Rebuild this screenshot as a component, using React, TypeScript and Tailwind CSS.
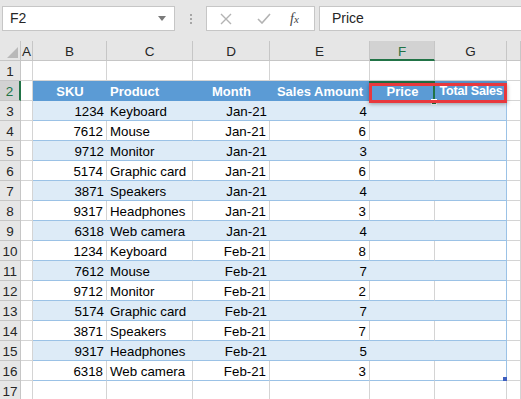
import React from "react";

// ---------------------------------------------------------------------------
// Data
// ---------------------------------------------------------------------------

const rows: [number, string, string, number][] = [
  [1234, "Keyboard", "Jan-21", 4],
  [7612, "Mouse", "Jan-21", 6],
  [9712, "Monitor", "Jan-21", 3],
  [5174, "Graphic card", "Jan-21", 6],
  [3871, "Speakers", "Jan-21", 4],
  [9317, "Headphones", "Jan-21", 3],
  [6318, "Web camera", "Jan-21", 4],
  [1234, "Keyboard", "Feb-21", 8],
  [7612, "Mouse", "Feb-21", 7],
  [9712, "Monitor", "Feb-21", 2],
  [5174, "Graphic card", "Feb-21", 7],
  [3871, "Speakers", "Feb-21", 7],
  [9317, "Headphones", "Feb-21", 5],
  [6318, "Web camera", "Feb-21", 3],
];

const letters = ["A", "B", "C", "D", "E", "F", "G", ""];

// ---------------------------------------------------------------------------
// Pieces
// ---------------------------------------------------------------------------

function FormulaBar() {
  return (
    <div className="flex h-[41px] items-start bg-[#e6e6e6] pt-[6px]">
      {/* Name box */}
      <div className="ml-[2px] flex h-[25px] w-[173px] items-center justify-between border border-[#c6c6c6] bg-white pl-[7px] pr-[8px] text-[14px] text-[#262626]">
        <span>F2</span>
        <svg width="8" height="5" viewBox="0 0 8 5">
          <path d="M0 0 L8 0 L4 5 Z" fill="#7a7a7a" />
        </svg>
      </div>
      {/* grip */}
      <div className="flex h-[25px] w-[31px] flex-col items-center justify-center gap-[2px]">
        <span className="h-[2px] w-[2px] bg-[#a6a6a6]" />
        <span className="h-[2px] w-[2px] bg-[#a6a6a6]" />
        <span className="h-[2px] w-[2px] bg-[#a6a6a6]" />
      </div>
      {/* Cancel / enter / fx */}
      <div className="flex h-[25px] w-[109px] items-center border border-[#c6c6c6] bg-white">
        <svg className="ml-[13px]" width="12" height="12" viewBox="0 0 12 12">
          <path d="M1 1 L11 11 M11 1 L1 11" stroke="#b3b3b3" strokeWidth="1.4" />
        </svg>
        <svg className="ml-[25px]" width="14" height="11" viewBox="0 0 14 11">
          <path d="M1 6 L5 10 L13 1" stroke="#b3b3b3" strokeWidth="1.6" fill="none" />
        </svg>
        <span className="ml-[19px] font-['Liberation_Serif',serif] text-[14px] italic text-[#444]">
          f<span className="text-[11px]">x</span>
        </span>
      </div>
      {/* Formula input */}
      <div className="ml-[4px] flex h-[25px] flex-1 items-center border border-r-0 border-[#c6c6c6] bg-white pl-[12px] text-[14px] text-[#262626]">
        Price
      </div>
    </div>
  );
}

function ColumnHeaders() {
  return (
    <>
      <div className="relative h-[20px] border-r border-b border-[#c6c6c6] bg-[#e6e6e6]">
        <svg className="absolute right-[2px] bottom-[2px]" width="11" height="11" viewBox="0 0 11 11">
          <path d="M11 0 L11 11 L0 11 Z" fill="#b9b9b9" />
        </svg>
      </div>
      {letters.map((l, i) =>
        l === "F" ? (
          <div
            key={i}
            className="h-[20px] border-r border-b-2 border-r-[#c6c6c6] border-b-[#217346] bg-[#d2d2d2] text-center text-[13.5px] leading-[22px] text-[#217346]"
          >
            {l}
          </div>
        ) : (
          <div
            key={i}
            className="h-[20px] border-r border-b border-[#c6c6c6] bg-[#e6e6e6] text-center text-[13.5px] leading-[22px] text-[#262626]"
          >
            {l}
          </div>
        )
      )}
    </>
  );
}

function RowHeader({ n }: { n: number }) {
  if (n === 2) {
    return (
      <div className="h-[20px] border-r-2 border-b border-r-[#217346] border-b-[#c6c6c6] bg-[#d2d2d2] text-center text-[13.5px] leading-[21px] text-[#217346]">
        {n}
      </div>
    );
  }
  return (
    <div className="h-[20px] border-r border-b border-[#c6c6c6] bg-[#e6e6e6] text-center text-[13.5px] leading-[21px] text-[#262626]">
      {n}
    </div>
  );
}

function Grid({ children }: { children?: React.ReactNode }) {
  return (
    <div className="h-[20px] border-r border-b border-[#d4d4d4] bg-white">{children}</div>
  );
}

function HeaderCell({ text, left, tight }: { text: string; left?: boolean; tight?: boolean }) {
  let cls = left
    ? "h-[20px] bg-[#5b9bd5] pl-[3px] text-[13px] leading-[21px] font-bold whitespace-nowrap text-white"
    : "h-[20px] bg-[#5b9bd5] text-center text-[13px] leading-[21px] font-bold whitespace-nowrap text-white";
  if (tight) {
    cls =
      "h-[20px] overflow-hidden bg-[#5b9bd5] text-center text-[12.5px] leading-[21px] font-bold tracking-[-0.2px] whitespace-nowrap text-white";
  }
  return <div className={cls}>{text}</div>;
}

function DataCell({
  text,
  band,
  right,
  last,
}: {
  text?: string | number;
  band: boolean;
  right?: boolean;
  last?: boolean;
}) {
  let cls = band
    ? "h-[20px] border-b border-b-[#9bc2e6] bg-[#ddebf7] text-[13.3px] leading-[22px] text-black"
    : "h-[20px] border-r border-b border-r-[#d4d4d4] border-b-[#9bc2e6] bg-white text-[13.3px] leading-[22px] text-black";
  if (last) {
    cls = band
      ? "h-[20px] border-r border-b border-[#9bc2e6] bg-[#ddebf7] text-[13.3px] leading-[22px] text-black"
      : "h-[20px] border-r border-b border-[#9bc2e6] bg-white text-[13.3px] leading-[22px] text-black";
  }
  return (
    <div className={cls}>
      <div className={right ? "pr-[3px] text-right" : "pl-[3px] whitespace-nowrap"}>{text}</div>
    </div>
  );
}

// ---------------------------------------------------------------------------
// App
// ---------------------------------------------------------------------------

export default function App() {
  return (
    <div className="h-[399px] w-[521px] overflow-hidden bg-white font-['Liberation_Sans',Arial,sans-serif]">
      <FormulaBar />

      <div className="relative grid grid-cols-[21px_12px_74px_86px_77px_100px_65px_72px_1fr]">
        <ColumnHeaders />

        {/* Row 1 */}
        <RowHeader n={1} />
        {letters.map((_, i) => (
          <Grid key={i} />
        ))}

        {/* Row 2 - table header */}
        <RowHeader n={2} />
        <Grid />
        <HeaderCell text="SKU" />
        <HeaderCell text="Product" left />
        <HeaderCell text="Month" />
        <HeaderCell text="Sales Amount" />
        <HeaderCell text="Price" />
        <HeaderCell text="Total Sales" tight />
        <Grid />

        {/* Rows 3-16 */}
        {rows.map((r, i) => {
          const band = i % 2 === 0;
          return (
            <React.Fragment key={i}>
              <RowHeader n={i + 3} />
              <Grid />
              <DataCell text={r[0]} band={band} right />
              <DataCell text={r[1]} band={band} />
              <DataCell text={r[2]} band={band} right />
              <DataCell text={r[3]} band={band} right />
              <DataCell band={band} />
              <DataCell band={band} last />
              <Grid />
            </React.Fragment>
          );
        })}

        {/* Row 17 */}
        <RowHeader n={17} />
        {letters.map((_, i) => (
          <Grid key={i} />
        ))}

        {/* Active cell F2 */}
        <div className="pointer-events-none absolute top-[40px] left-[369px] h-[21px] w-[66px] border-2 border-[#217346]" />
        {/* fill handle */}
        <div className="pointer-events-none absolute top-[58px] left-[431px] h-[6px] w-[6px] border border-white bg-[#217346]" />
        {/* red highlight */}
        <div className="pointer-events-none absolute top-[42px] left-[369px] h-[20px] w-[138px] border-[3px] border-[#e8383d] shadow-[0_1px_4px_rgba(0,0,0,0.35)]" />
        {/* table resize handle */}
        <div className="absolute top-[336px] left-[503px] h-[4px] w-[4px] bg-[#3f5fbf]" />
      </div>
    </div>
  );
}
